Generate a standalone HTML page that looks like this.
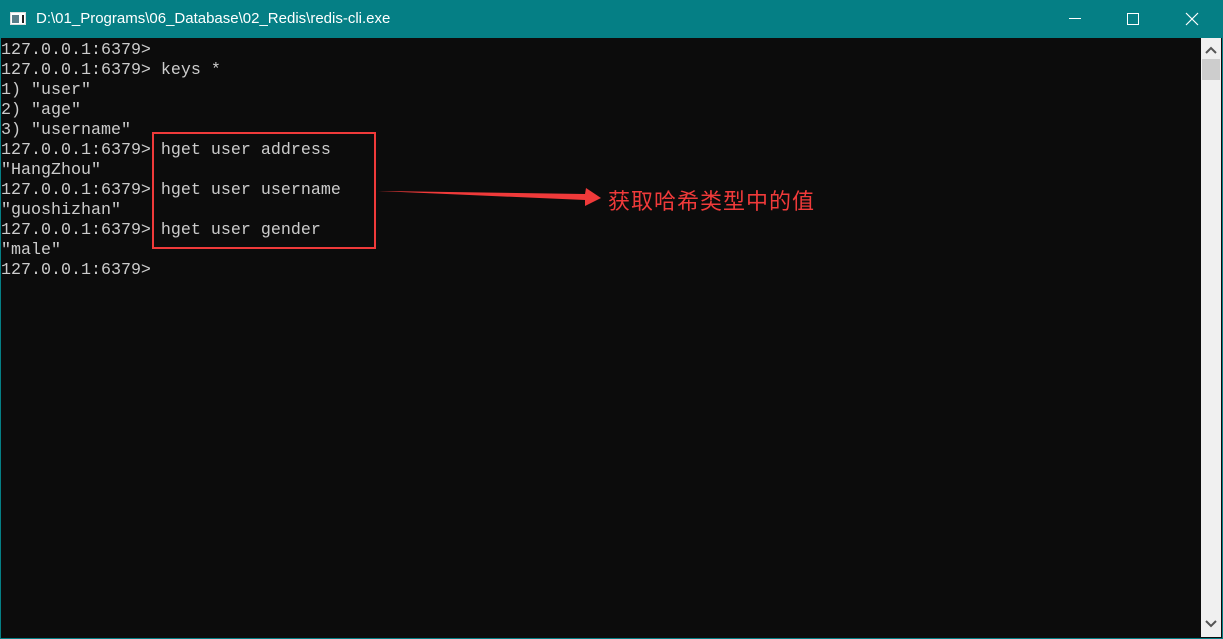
<!DOCTYPE html>
<html><head><style>
body{margin:0;width:1223px;height:639px;overflow:hidden;background:#0c0c0c;position:relative;font-family:"Liberation Sans",sans-serif}
#tb{position:absolute;left:0;top:0;width:1223px;height:38px;background:#057f85;color:#fff}
#tb .t{position:absolute;left:36px;top:10px;font-size:15px}
#term{position:absolute;left:1px;top:41px;font-family:"Liberation Mono",monospace;font-size:16.67px;line-height:20px;color:#cccccc;white-space:pre}
#sb{position:absolute;left:1201px;top:38px;width:20px;height:599px;background:#f0f0f0}
#bd{position:absolute;left:0;top:0;width:1221px;height:637px;border:1px solid #057f85;pointer-events:none}
</style></head><body>
<div id="tb">
<svg style="position:absolute;left:10px;top:12px" width="16" height="14"><rect x="0.5" y="0.5" width="15" height="12" fill="#fff" stroke="#ddd"/><rect x="2" y="3" width="7" height="8" fill="#5a7f8a"/><rect x="12" y="3" width="2" height="8" fill="#222"/></svg>
<div class="t">D:\01_Programs\06_Database\02_Redis\redis-cli.exe</div>
<div style="position:absolute;left:1069px;top:18px;width:12px;height:1px;background:#fff"></div>
<div style="position:absolute;left:1127px;top:13px;width:10px;height:10px;border:1px solid #fff"></div>
<svg style="position:absolute;left:1185px;top:12px" width="14" height="14"><path d="M1 1L13 13M13 1L1 13" stroke="#fff" stroke-width="1.2"/></svg>
</div>
<div id="term">127.0.0.1:6379&gt;
127.0.0.1:6379&gt; keys *
1) "user"
2) "age"
3) "username"
127.0.0.1:6379&gt; hget user address
"HangZhou"
127.0.0.1:6379&gt; hget user username
"guoshizhan"
127.0.0.1:6379&gt; hget user gender
"male"
127.0.0.1:6379&gt;</div>
<div id="sb">
<svg style="position:absolute;left:4px;top:8px" width="12" height="8"><path d="M1 7L6 2L11 7" stroke="#555" stroke-width="2" fill="none"/></svg>
<div style="position:absolute;left:1px;top:21px;width:18px;height:21px;background:#cdcdcd"></div>
<svg style="position:absolute;left:4px;top:582px" width="12" height="8"><path d="M1 1L6 6L11 1" stroke="#555" stroke-width="2" fill="none"/></svg>
</div>
<div style="position:absolute;left:152px;top:132px;width:220px;height:113px;border:2px solid #f03a3a"></div>
<svg style="position:absolute;left:0;top:0" width="1223" height="639"><path d="M378 191L585 194L586 188L601 198L585 206L585 200Z" fill="#f03a3a"/></svg>
<div style="position:absolute;left:608px;top:186px;font-family:'Noto Sans CJK SC',sans-serif;font-size:22px;line-height:28px;color:#f03a3a;letter-spacing:1px">获取哈希类型中的值</div>
<div id="bd"></div>
</body></html>
